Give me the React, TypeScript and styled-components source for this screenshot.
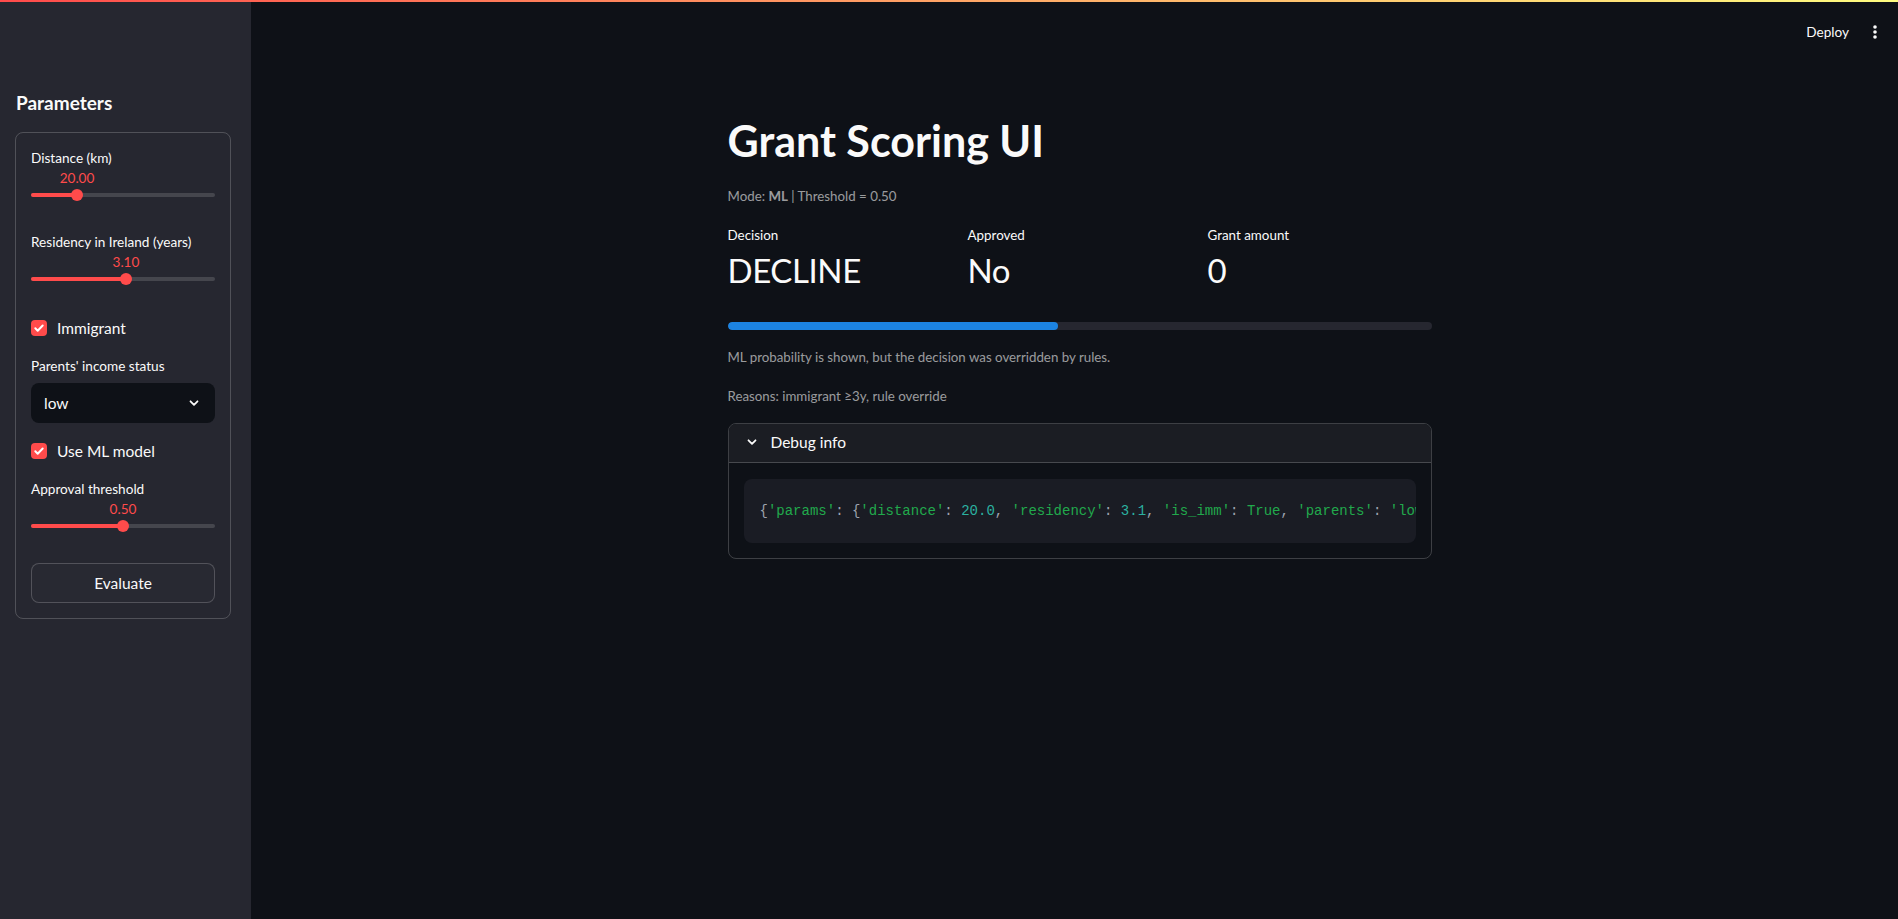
import React from "react";
import styled, { createGlobalStyle } from "styled-components";

const Global = createGlobalStyle`
  html, body { margin: 0; padding: 0; background: #0e1117; }
  body { font-family: "Lato", "Noto Sans", sans-serif; color: #fafafa; }
  * { box-sizing: border-box; }
`;

const AppShell = styled.div`
  display: flex;
  flex-direction: column;
  width: 100%;
  height: 919px;
  overflow: hidden;
`;

const Decoration = styled.div`
  height: 2px;
  flex: none;
  background: linear-gradient(90deg, rgb(255, 75, 75), rgb(255, 253, 128));
`;

const Body = styled.div`
  display: flex;
  flex: 1;
  min-height: 0;
`;

const Sidebar = styled.aside`
  width: 251px;
  flex: none;
  background: #262730;
  padding: 89px 20px 0 15px;
  display: flex;
  flex-direction: column;
`;

const SideHeading = styled.h2`
  margin: 0 0 0 1px;
  font-size: 19px;
  line-height: 24px;
  font-weight: 700;
  color: #fafafa;
`;

const Panel = styled.div`
  margin-top: 17px;
  border: 1px solid rgba(250, 250, 250, 0.2);
  border-radius: 8px;
  padding: 15px;
  display: flex;
  flex-direction: column;
  gap: 16px;
`;

const SliderWrap = styled.div`
  display: flex;
  flex-direction: column;
  height: 68px;
`;

const WidgetLabel = styled.div`
  font-size: 13.6px;
  line-height: 20px;
  height: 20px;
  color: #fafafa;
  white-space: nowrap;
`;

const Rail = styled.div`
  position: relative;
  margin-top: 25px;
  height: 4px;
  border-radius: 2px;
  background: rgba(250, 250, 250, 0.15);
`;

const RailFill = styled.div`
  height: 100%;
  border-radius: 2px;
  background: #ff4b4b;
`;

const Thumb = styled.div`
  position: absolute;
  top: 50%;
  width: 12px;
  height: 12px;
  border-radius: 50%;
  background: #ff4b4b;
  transform: translate(-50%, -50%);
`;

const ThumbValue = styled.div`
  position: absolute;
  top: -25px;
  font-size: 13.6px;
  line-height: 20px;
  color: #ff4b4b;
  transform: translateX(-50%);
  white-space: nowrap;
`;

const CheckRow = styled.label`
  display: flex;
  align-items: center;
  gap: 10px;
  height: 24px;
  font-size: 15.5px;
  color: #fafafa;
`;

const CheckBox = styled.span`
  width: 16px;
  height: 16px;
  border-radius: 4px;
  background: #ff4b4b;
  display: flex;
  align-items: center;
  justify-content: center;
`;

const SelectWrap = styled.div`
  display: flex;
  flex-direction: column;
  gap: 7px;
`;

const SelectBox = styled.div`
  height: 40px;
  border-radius: 8px;
  background: #0e1117;
  display: flex;
  align-items: center;
  justify-content: space-between;
  padding: 0 15px 0 13px;
  font-size: 15.5px;
  color: #fafafa;
`;

const Button = styled.button`
  height: 40px;
  border: 1px solid rgba(250, 250, 250, 0.2);
  border-radius: 8px;
  background: #282932;
  color: #fafafa;
  font-family: inherit;
  font-size: 15.5px;
`;

const Main = styled.main`
  flex: 1;
  min-width: 0;
  display: flex;
  flex-direction: column;
  padding-left: 10px;
`;

const TopBar = styled.header`
  height: 60px;
  flex: none;
  display: flex;
  align-items: center;
  justify-content: flex-end;
  gap: 24px;
  padding-right: 21px;
  margin-left: -10px;
`;

const DeployLink = styled.span`
  font-size: 13.6px;
  color: #fafafa;
`;

const Content = styled.div`
  width: 704px;
  margin: 0 auto;
  display: flex;
  flex-direction: column;
`;

const Title = styled.h1`
  margin: 53px 0 0 0;
  font-size: 43px;
  line-height: 52px;
  font-weight: 700;
  color: #fafafa;
`;

const Caption = styled.div<{ $mt: number }>`
  margin-top: ${(p) => p.$mt}px;
  font-size: 13.3px;
  line-height: 20px;
  color: rgba(250, 250, 250, 0.6);
  b { font-weight: 700; }
`;

const Metrics = styled.div`
  margin-top: 19px;
  display: grid;
  grid-template-columns: repeat(3, 1fr);
  gap: 16px;
`;

const Metric = styled.div`
  display: flex;
  flex-direction: column;
  gap: 3px;
`;

const MetricLabel = styled.div`
  font-size: 13.4px;
  line-height: 20px;
  color: #fafafa;
`;

const MetricValue = styled.div`
  font-size: 33px;
  line-height: 44px;
  letter-spacing: -0.4px;
  color: #fafafa;
`;

const Progress = styled.div`
  margin-top: 30px;
  height: 8px;
  border-radius: 4px;
  background: #262730;
  overflow: hidden;
`;

const ProgressFill = styled.div`
  height: 100%;
  border-radius: 4px;
  background: #1c83e1;
`;

const Expander = styled.div`
  margin-top: 17px;
  border: 1px solid rgba(250, 250, 250, 0.2);
  border-radius: 8px;
  overflow: hidden;
`;

const ExpanderHeader = styled.div`
  height: 39px;
  padding-bottom: 2px;
  background: #1b1d23;
  border-bottom: 1px solid rgba(250, 250, 250, 0.2);
  display: flex;
  align-items: center;
  gap: 13px;
  padding-left: 17px;
  font-size: 15.5px;
  color: #fafafa;
`;

const ExpanderBody = styled.div`
  padding: 16px 15px 15px 15px;
`;

const CodeBlock = styled.pre`
  margin: 0;
  height: 64px;
  border-radius: 8px;
  background: #1a1c24;
  padding: 0 0 0 16px;
  display: flex;
  align-items: center;
  overflow: hidden;
  white-space: pre;
  font-family: "Liberation Mono", "DejaVu Sans Mono", monospace;
  font-size: 14px;
  color: #a3a8b4;
`;

const Tok = styled.span<{ $k: "s" | "n" | "p" }>`
  color: ${(p) => (p.$k === "s" ? "#21a94c" : p.$k === "n" ? "#2bb1a0" : "#9da3ae")};
`;

const Check = () => (
  <svg width="12" height="12" viewBox="0 0 12 12">
    <path d="M2.3 6.3l2.4 2.4 5-5.2" fill="none" stroke="#fff" strokeWidth="2" strokeLinecap="round" strokeLinejoin="round" />
  </svg>
);

const Chevron = ({ size = 12 }: { size?: number }) => (
  <svg width={size} height={size} viewBox="0 0 12 12">
    <path d="M2.5 4.3l3.5 3.5 3.5-3.5" fill="none" stroke="#fafafa" strokeWidth="1.8" strokeLinecap="round" strokeLinejoin="round" />
  </svg>
);

const Dots = () => (
  <svg width="4" height="16" viewBox="0 0 4 16">
    <circle cx="2" cy="3" r="1.8" fill="#fafafa" />
    <circle cx="2" cy="8" r="1.8" fill="#fafafa" />
    <circle cx="2" cy="13" r="1.8" fill="#fafafa" />
  </svg>
);

const Slider = ({ label, value, pct }: { label: string; value: string; pct: number }) => (
  <SliderWrap>
    <WidgetLabel>{label}</WidgetLabel>
    <Rail>
      <RailFill style={{ width: `${pct}%` }} />
      <Thumb style={{ left: `${pct}%` }} />
      <ThumbValue style={{ left: `${pct}%` }}>{value}</ThumbValue>
    </Rail>
  </SliderWrap>
);

const Checkbox = ({ label }: { label: string }) => (
  <CheckRow>
    <CheckBox>
      <Check />
    </CheckBox>
    {label}
  </CheckRow>
);

const code: [string, "s" | "n" | "p"][] = [
  ["{", "p"], ["'params'", "s"], [": {", "p"], ["'distance'", "s"], [": ", "p"], ["20.0", "n"], [", ", "p"],
  ["'residency'", "s"], [": ", "p"], ["3.1", "n"], [", ", "p"], ["'is_imm'", "s"], [": ", "p"], ["True", "s"],
  [", ", "p"], ["'parents'", "s"], [": ", "p"], ["'low'", "s"], [", ", "p"], ["'use_ml'", "s"], [": ", "p"],
  ["True", "s"], ["}, ", "p"], ["'ml_prob'", "s"], [": ", "p"], ["0.47", "n"], ["}", "p"],
];

export default function App() {
  return (
    <AppShell>
      <Global />
      <Decoration />
      <Body>
        <Sidebar>
          <SideHeading>Parameters</SideHeading>
          <Panel>
            <Slider label="Distance (km)" value="20.00" pct={25} />
            <Slider label="Residency in Ireland (years)" value="3.10" pct={51.6} />
            <Checkbox label="Immigrant" />
            <SelectWrap>
              <WidgetLabel>Parents' income status</WidgetLabel>
              <SelectBox>
                <span>low</span>
                <Chevron />
              </SelectBox>
            </SelectWrap>
            <Checkbox label="Use ML model" />
            <Slider label="Approval threshold" value="0.50" pct={50} />
            <Button>Evaluate</Button>
          </Panel>
        </Sidebar>
        <Main>
          <TopBar>
            <DeployLink>Deploy</DeployLink>
            <Dots />
          </TopBar>
          <Content>
            <Title>Grant Scoring UI</Title>
            <Caption $mt={19}>
              Mode: <b>ML</b> | Threshold = 0.50
            </Caption>
            <Metrics>
              <Metric>
                <MetricLabel>Decision</MetricLabel>
                <MetricValue>DECLINE</MetricValue>
              </Metric>
              <Metric>
                <MetricLabel>Approved</MetricLabel>
                <MetricValue>No</MetricValue>
              </Metric>
              <Metric>
                <MetricLabel>Grant amount</MetricLabel>
                <MetricValue>0</MetricValue>
              </Metric>
            </Metrics>
            <Progress>
              <ProgressFill style={{ width: "47%" }} />
            </Progress>
            <Caption $mt={17}>ML probability is shown, but the decision was overridden by rules.</Caption>
            <Caption $mt={19}>Reasons: immigrant ≥3y, rule override</Caption>
            <Expander>
              <ExpanderHeader>
                <Chevron size={12} />
                Debug info
              </ExpanderHeader>
              <ExpanderBody>
                <CodeBlock>
                  {code.map(([t, k], i) => (
                    <Tok key={i} $k={k}>
                      {t}
                    </Tok>
                  ))}
                </CodeBlock>
              </ExpanderBody>
            </Expander>
          </Content>
        </Main>
      </Body>
    </AppShell>
  );
}
